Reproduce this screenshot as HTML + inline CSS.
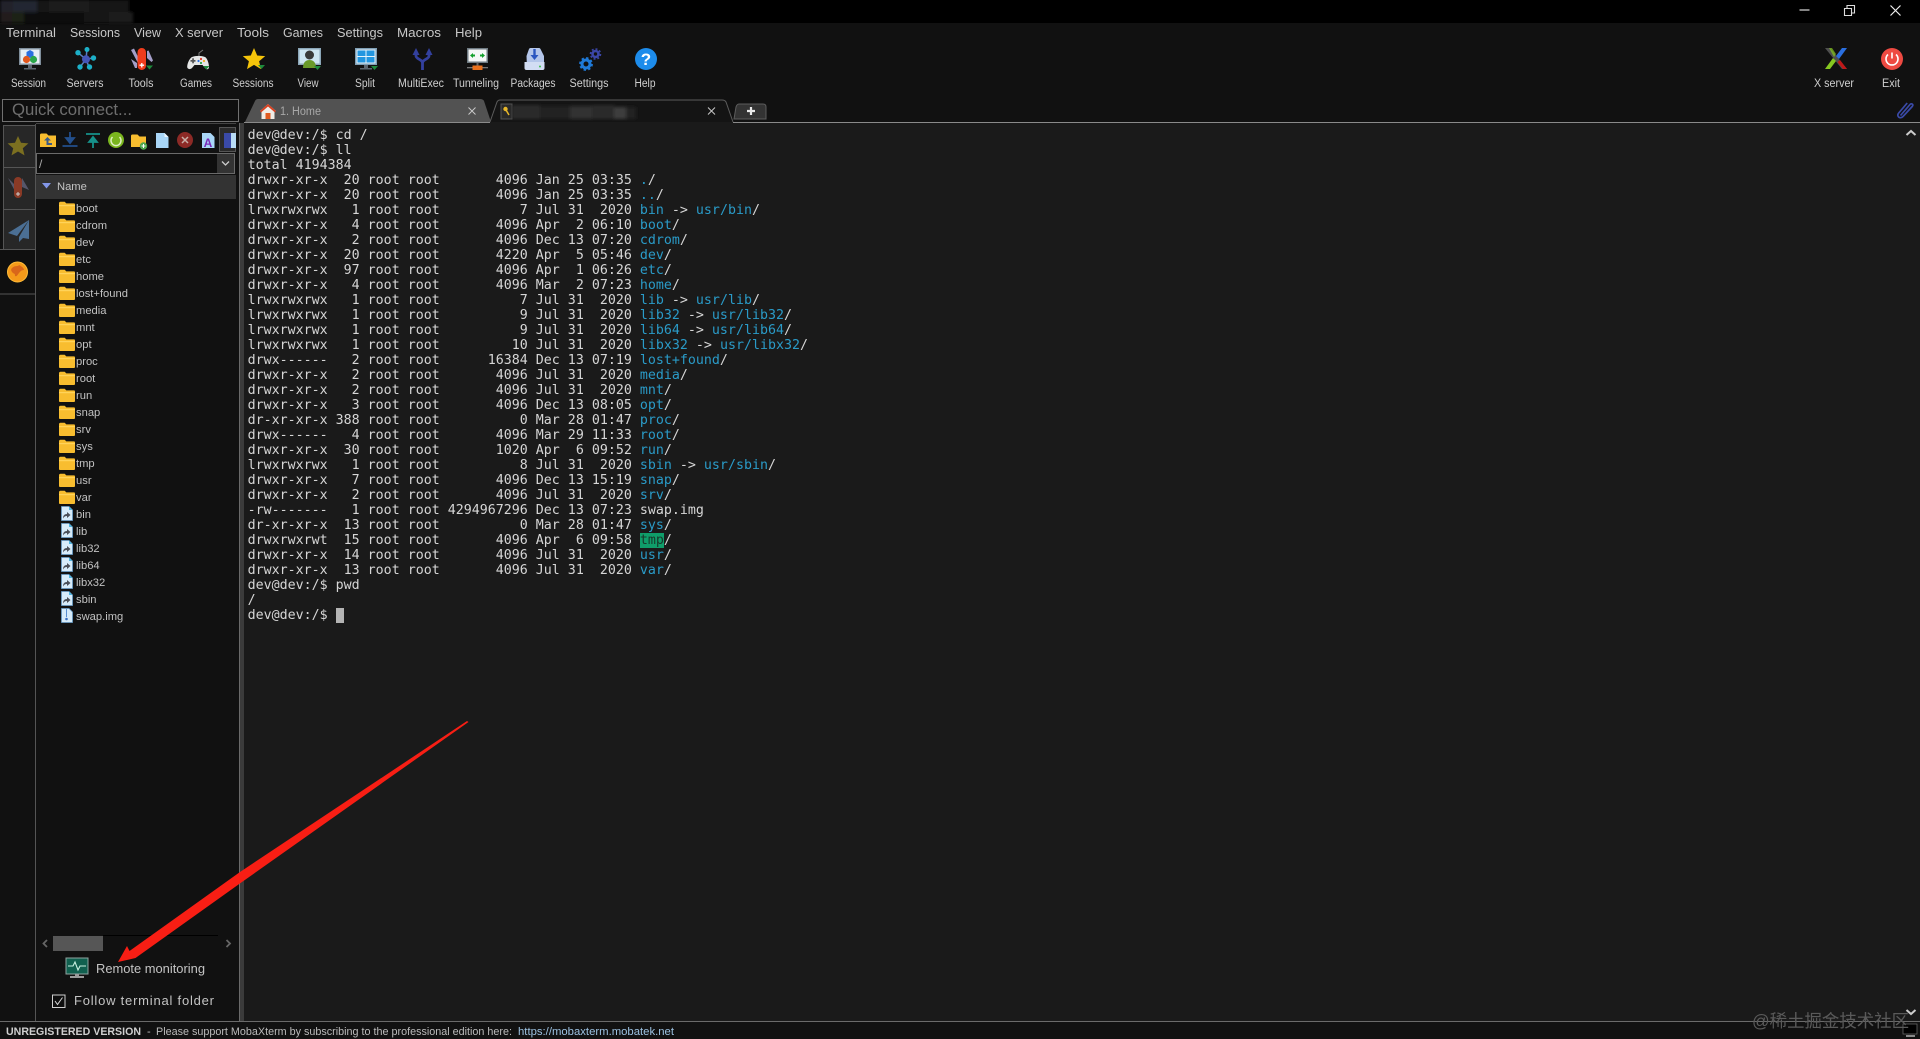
<!DOCTYPE html>
<html><head><meta charset="utf-8"><title>MobaXterm</title>
<style>
html,body{margin:0;padding:0;width:1920px;height:1039px;overflow:hidden;background:#111}
svg{position:absolute;left:0;top:0}
text{font-family:"Liberation Sans",sans-serif}
pre{position:absolute;left:247.6px;top:128px;margin:0;font:13.3px/15px "DejaVu Sans Mono","Liberation Mono",monospace;color:#d6d6d6;white-space:pre}
pre b{font-weight:normal;color:#2a9bc8}
pre i{font-style:normal;background:#0f9d6a;color:#17392b}
pre u{text-decoration:none;display:inline-block;width:8px;height:15px;background:#b4b4b4;vertical-align:top}
.ov{z-index:3}
</style></head><body>
<svg width="1920" height="1039" viewBox="0 0 1920 1039">
<defs>
<symbol id="fd" viewBox="0 0 16 14" width="16" height="14"><path d="M0 2.5C0 1.2.7.8 1.5.8h4.2l1.600 1.600H15c.6 0 1 .4 1 1V13c0 .6-.4 1-1 1H1c-.6 0-1-.4-1-1z" fill="#f8bd2f"/><path d="M0 4h16v1.200H0z" fill="#ffd35a"/></symbol>
<symbol id="fl" viewBox="0 0 12 15" width="12" height="15"><path d="M.5.5h7.500l3.500 3.500v10.500H.5z" fill="#d7ecfa" stroke="#6a9fca" stroke-width=".8"/><path d="M8 .5v3.500h3.500z" fill="#4fb5de"/><path d="M2 12.500c0-3 1.500-4.500 4-4.500V6l3.500 3-3.500 3v-2c-2 0-3 .8-4 2.500z" fill="#4a4f58"/></symbol>
<filter id="bl"><feGaussianBlur stdDeviation="1.500"/></filter>
</defs>

<!-- bars -->
<rect width="1920" height="1039" fill="#111"/>
<rect width="1920" height="23" fill="#000"/>
<g filter="url(#bl)">
<rect x="0" y="0" width="13" height="12" fill="#20232b"/><rect x="13" y="0" width="24" height="12" fill="#232633"/><rect x="37" y="0" width="12" height="12" fill="#121212"/><rect x="49" y="0" width="40" height="12" fill="#1b1b1b"/><rect x="89" y="0" width="40" height="12" fill="#141414"/>
<rect x="0" y="12" width="12" height="11" fill="#241c1c"/><rect x="12" y="12" width="12" height="11" fill="#1b2016"/><rect x="24" y="12" width="60" height="11" fill="#0e0e0e"/><rect x="84" y="12" width="25" height="11" fill="#141414"/><rect x="109" y="12" width="24" height="11" fill="#1c1c1c"/>
</g>
<!-- window controls -->
<path d="M1799.500 10h10" stroke="#ddd" stroke-width="1.200"/>
<path d="M1844.500 8.500h7v7h-7zM1847 8V5.500h7.500v7.500h-2.800" fill="none" stroke="#ddd" stroke-width="1.100"/>
<path d="M1890.500 5.500l10 10m0-10l-10 10" stroke="#eee" stroke-width="1.200"/>

<!-- menu -->
<g font-size="13" fill="#c8c8c8">
<text x="6" y="37" textLength="50" lengthAdjust="spacingAndGlyphs">Terminal</text>
<text x="70" y="37" textLength="50" lengthAdjust="spacingAndGlyphs">Sessions</text>
<text x="134" y="37" textLength="27" lengthAdjust="spacingAndGlyphs">View</text>
<text x="175" y="37" textLength="48" lengthAdjust="spacingAndGlyphs">X server</text>
<text x="237" y="37" textLength="32" lengthAdjust="spacingAndGlyphs">Tools</text>
<text x="283" y="37" textLength="40" lengthAdjust="spacingAndGlyphs">Games</text>
<text x="337" y="37" textLength="46" lengthAdjust="spacingAndGlyphs">Settings</text>
<text x="397" y="37" textLength="44" lengthAdjust="spacingAndGlyphs">Macros</text>
<text x="455" y="37" textLength="27" lengthAdjust="spacingAndGlyphs">Help</text>
</g>

<!-- toolbar labels -->
<g font-size="11.500" fill="#cfcfcf" text-anchor="middle">
<text x="28.500" y="87" textLength="35" lengthAdjust="spacingAndGlyphs">Session</text>
<text x="85" y="87" textLength="37" lengthAdjust="spacingAndGlyphs">Servers</text>
<text x="141" y="87" textLength="25" lengthAdjust="spacingAndGlyphs">Tools</text>
<text x="196" y="87" textLength="32" lengthAdjust="spacingAndGlyphs">Games</text>
<text x="253" y="87" textLength="41" lengthAdjust="spacingAndGlyphs">Sessions</text>
<text x="308" y="87" textLength="21" lengthAdjust="spacingAndGlyphs">View</text>
<text x="365" y="87" textLength="20" lengthAdjust="spacingAndGlyphs">Split</text>
<text x="421" y="87" textLength="46" lengthAdjust="spacingAndGlyphs">MultiExec</text>
<text x="476" y="87" textLength="46" lengthAdjust="spacingAndGlyphs">Tunneling</text>
<text x="533" y="87" textLength="45" lengthAdjust="spacingAndGlyphs">Packages</text>
<text x="589" y="87" textLength="39" lengthAdjust="spacingAndGlyphs">Settings</text>
<text x="645" y="87" textLength="21" lengthAdjust="spacingAndGlyphs">Help</text>
<text x="1834" y="87" textLength="40" lengthAdjust="spacingAndGlyphs">X server</text>
<text x="1891" y="87" textLength="18" lengthAdjust="spacingAndGlyphs">Exit</text>
</g>

<!-- Session -->
<rect x="19" y="48" width="22" height="17" fill="#7f8e9b"/><rect x="20.500" y="49.500" width="19" height="14" fill="#e6eef6"/>
<path d="M30 50l3.500 2v4l-3.500 2-3.500-2v-4z" fill="#2a6fe0"/><circle cx="26.500" cy="59.500" r="3.600" fill="#e2571d"/><circle cx="33.500" cy="59.500" r="3.600" fill="#2aa64a"/>
<rect x="28" y="65" width="4" height="3" fill="#5c6670"/><rect x="24" y="68" width="12" height="1.500" fill="#5c6670"/>
<!-- Servers -->
<g stroke="#5a7fc0" stroke-width="1.500"><path d="M86 59.300L78 52.700M86 59.300L87 49M86 59.300L93 58M86 59.300L89 67M86 59.300L80 67"/></g>
<g fill="#1cb0c8"><circle cx="78" cy="52.700" r="2.700"/><circle cx="87" cy="49.500" r="2.500"/><circle cx="93.500" cy="58" r="2.700"/><circle cx="89.500" cy="67" r="2.700"/><circle cx="80" cy="67" r="2.700"/></g>
<circle cx="86" cy="59.300" r="4" fill="#4455b8"/>
<!-- Tools -->
<path d="M131 50l3-1.500 5 10.500v6zM131 59l6 4v5l-2 0zM147 51l1.500-.5 4.500 10-1.500 1.500-4.500-4z" fill="#a49ec8"/>
<rect x="137.500" y="48" width="8.500" height="22" rx="4.200" fill="#ef3c1c"/><path d="M141.800 63v4.500M139.500 65.200h4.600" stroke="#fff" stroke-width="1.300"/>
<path d="M146 65.500h7l-3.500 4z" fill="#1e8a3c"/>
<!-- Games -->
<path d="M192 57c4-1.500 9-1.500 13 0 2 1 4 6 4 10 0 2.500-2.500 3-4 1l-2.500-3h-8L192 68c-2 2-5 1-4.800-1.500.2-4 2.800-8.500 4.800-9.500z" fill="#e4e6e6"/>
<path d="M199 56v-3l4-3" stroke="#777" fill="none"/>
<rect x="190.500" y="60" width="5" height="1.700" fill="#555"/><rect x="192.200" y="58.300" width="1.700" height="5" fill="#555"/>
<circle cx="201" cy="59" r="1.100" fill="#e03a2a"/><circle cx="204" cy="61" r="1.100" fill="#f0b020"/><circle cx="198.500" cy="61" r="1.100" fill="#2a6fe0"/><circle cx="201" cy="63" r="1.100" fill="#2aa64a"/>
<path d="M203 66h6.500l-3.200 3.500z" fill="#1e8a3c"/>
<!-- Sessions star -->
<path d="M254 48l3.200 7.500 8 .6-6.100 5.200 1.900 7.800-7-4.200-7 4.200 1.900-7.800-6.100-5.200 8-.6z" fill="#f5c40a"/><path d="M258 65h7l-3.500 4z" fill="#1e8a3c"/>
<!-- View -->
<rect x="298" y="48" width="23" height="17" fill="#8ba6b8"/><rect x="299.500" y="49.500" width="20" height="14" fill="#cfe6f2"/>
<circle cx="309.500" cy="55" r="4.500" fill="#3a3a3a"/><path d="M303 68c0-6 3-8 6.500-8s6.500 2 6.500 8z" fill="#6a9a2a"/>
<path d="M314 66h7l-3.500 4z" fill="#1e8a3c"/>
<!-- Split -->
<rect x="355" y="48" width="22" height="17" fill="#7f9fb5"/><rect x="356.500" y="49.500" width="19" height="14" fill="#e4f2fa"/>
<rect x="357.500" y="50.500" width="8" height="5.500" fill="#2296e0"/><rect x="366.500" y="50.500" width="8" height="5.500" fill="#2296e0"/><rect x="357.500" y="57" width="8" height="5.500" fill="#2296e0"/><rect x="366.500" y="57" width="8" height="5.500" fill="#2296e0"/>
<rect x="364" y="65" width="4" height="3" fill="#5c6670"/><rect x="360" y="68" width="12" height="1.500" fill="#5c6670"/>
<path d="M371 66h7l-3.500 4z" fill="#1e8a3c"/>
<!-- MultiExec -->
<path d="M422.500 70V62M416 53v3c0 3 6.500 3.500 6.500 7 0-3.500 6.500-4 6.500-7v-3" fill="none" stroke="#33409e" stroke-width="2.800"/>
<path d="M412.500 55l3.500-7 3.500 7zM425.500 55l3.500-7 3.500 7z" fill="#33409e"/>
<!-- Tunneling -->
<rect x="467" y="48" width="21" height="15" fill="#6e7a82"/><rect x="468.500" y="49.500" width="18" height="12" fill="#f5f7f7"/>
<path d="M470 55.500l3-2.500v1.500h2v2h-2V58zM485 55.500l-3-2.500v1.500h-2v2h2V58z" fill="#14a02e"/>
<rect x="476.500" y="63" width="2" height="3" fill="#666"/><rect x="467" y="67" width="21" height="1.300" fill="#777"/><rect x="472.500" y="65.500" width="10" height="4.500" fill="#e8701c"/>
<!-- Packages -->
<path d="M526.500 56l2.500-7q.4-1 1.500-1h8.500q1.100 0 1.500 1l3.500 7v12a2 2 0 0 1-2 2h-13a2 2 0 0 1-2-2z" fill="#b4c6ea"/><path d="M524.500 62h20v6a2 2 0 0 1-2 2h-16a2 2 0 0 1-2-2z" fill="#d2ddf3"/>
<path d="M534.500 49v7" stroke="#2a55c0" stroke-width="2.400"/><path d="M530.500 55h8l-4 5z" fill="#2a55c0"/><circle cx="540" cy="66.500" r="1" fill="#3cc04a"/>
<!-- Settings -->
<circle cx="586" cy="64" r="4" fill="none" stroke="#1f7ad8" stroke-width="3"/><circle cx="586" cy="64" r="6" fill="none" stroke="#1f7ad8" stroke-width="1.800" stroke-dasharray="2.400 2.300"/>
<circle cx="595.500" cy="54" r="3" fill="none" stroke="#3b46a8" stroke-width="2.600"/><circle cx="595.500" cy="54" r="5" fill="none" stroke="#3b46a8" stroke-width="1.600" stroke-dasharray="2 1.900"/>
<!-- Help -->
<circle cx="646" cy="59" r="11" fill="#1d8ceb"/><text x="646" y="65" font-size="17" font-weight="bold" fill="#fff" text-anchor="middle">?</text>
<!-- X server -->
<path d="M1825 48h5l17 21h-5z" fill="#4f4f4f"/><path d="M1825 69l8-11 3 3-6 8z" fill="#86c820"/><path d="M1842 48h5l-8 11-3-3z" fill="#2a6fe0"/><path d="M1829 48h3l4 6-2 3z" fill="#86c820" opacity=".7"/><path d="M1840 60l7 9h-4l-5.500-7z" fill="#c01818"/>
<!-- Exit -->
<circle cx="1892" cy="59" r="11" fill="#ee4a42"/><path d="M1888 54.500a6 6 0 1 0 8 0" fill="none" stroke="#fff" stroke-width="1.600"/><path d="M1892 52.500v6" stroke="#fff" stroke-width="1.600"/>

<!-- quick connect -->
<rect x="2.500" y="99.500" width="236" height="22" fill="#0e0e0e" stroke="#707070"/>
<text x="12" y="115" font-size="16.500" fill="#6e6e6e" textLength="120" lengthAdjust="spacingAndGlyphs">Quick connect...</text>

<!-- tabs -->
<rect x="244" y="122" width="1676" height="900" fill="#1a1a1a"/>
<path d="M245 122l10-21q1-2 3-2H480q3 0 4 2l7 21z" fill="#525252"/>
<path d="M260 111l8-7 8 7h-1.500v8h-13v-8z" fill="#f0ece6"/><path d="M260 111l8-7 8 7-1 1.500-7-6-7 6z" fill="#d8401f"/><rect x="265.500" y="113" width="5" height="6" fill="#e05a20"/>
<text x="280" y="115" font-size="11.500" fill="#a8a8a8" textLength="41" lengthAdjust="spacingAndGlyphs">1. Home</text>
<path d="M468.500 107.500l7 7m0-7l-7 7" stroke="#c8c8c8" stroke-width="1"/>
<path d="M490 122l7-20q1-2 3-2H722q3 0 4 2l7 20" fill="#141414" stroke="#5c5c5c"/>
<rect x="501" y="104" width="11" height="15" fill="#2a2a2a" stroke="#555"/><circle cx="505.500" cy="109" r="2.200" fill="#e8b82a"/><path d="M506 110l3 5" stroke="#e8b82a" stroke-width="1.500"/>
<g filter="url(#bl)"><rect x="512" y="105" width="28" height="14" fill="#2c2c2c"/><rect x="540" y="106" width="30" height="13" fill="#242424"/><rect x="570" y="106" width="22" height="13" fill="#303030"/><rect x="592" y="105" width="22" height="14" fill="#2a2a2a"/><rect x="614" y="107" width="12" height="12" fill="#3c3c3c"/><rect x="626" y="107" width="10" height="12" fill="#222"/></g>
<path d="M708 107.500l7 7m0-7l-7 7" stroke="#c8c8c8" stroke-width="1"/>
<path d="M734 119l2-12q1-3 3-3h24q3 0 3 3v12z" fill="#333" stroke="#5c5c5c"/>
<path d="M751 107v8M747 111h8" stroke="#e8e8e8" stroke-width="2.200"/>
<path d="M244 122.500H490M733 122.500H1920" stroke="#8a8a8a"/>
<path d="M1900.500 115.500l9.500-11c1.600-1.800 3.800.2 2.200 2l-9.200 10c-3 3-7-.3-4.300-3.500l8.500-10" fill="none" stroke="#3a4aa8" stroke-width="1.700"/>

<!-- terminal scroll chevrons -->
<path d="M1906.500 135l4.500-4 4.500 4" fill="none" stroke="#ccc" stroke-width="2"/>
<path d="M1906.500 1010l4.500 4 4.500-4" fill="none" stroke="#ccc" stroke-width="2"/>

<!-- splitter -->
<rect x="239" y="123" width="5" height="898" fill="#3b3b3b"/><rect x="239" y="123" width="1" height="898" fill="#6a6a6a"/>

<!-- left tabs -->
<rect x="3" y="125" width="32" height="124" fill="#272727"/>
<path d="M3.500 125v124M3 125.500h32M3 167.500h32M3 209.500h32" stroke="#555" fill="none"/>
<path d="M0 249.500h35.500v44.500H0" fill="#0f0f0f" stroke="#555"/>
<path d="M18 136l3 6.800 7.400.6-5.600 4.800 1.700 7.200-6.500-3.900-6.500 3.900 1.700-7.200-5.600-4.800 7.400-.6z" fill="#7b6f20"/>
<path d="M8 178l9 9v8zM29 190l-7-12v9z" fill="#56566a"/><rect x="14" y="177" width="8" height="21" rx="4" fill="#8a3a26"/><path d="M18 192v4M16 194h4" stroke="#ccc"/>
<path d="M29 220L8 233l9 3zM29 220l-10 17v5l4-4 6 1z" fill="#4b6f94"/>
<circle cx="17.500" cy="272" r="10" fill="#f59a1a"/><path d="M12 268c3-3 6-1 7-3 2 1 5 3 5 5-3 0-4 2-5 3s-2 4-4 3c0-3-1-2-2-3s-3-3-1-5z" fill="#d9661a"/><circle cx="17.500" cy="272" r="10" fill="none" stroke="#ffbd3a"/>

<!-- sftp panel -->
<path d="M35.500 124v897" stroke="#555"/><path d="M36 123.500h200" stroke="#444"/>
<!-- file toolbar -->
<path d="M40 135c0-1 .5-1.500 1.500-1.500h5l2 2H56v11.500H40z" fill="#f8bd2f"/><path d="M47.500 137l-3.500 3.500h2.500V145H52v-2h-3.500v-2.500H51z" fill="#3a5a88"/>
<path d="M70 132v9M66 138l4 5 4-5zM62.500 146h15" stroke="#234f8c" fill="#234f8c" stroke-width="1.800"/>
<path d="M86 134h14M93 148v-9M89 142l4-5 4 5z" stroke="#16918a" fill="#16918a" stroke-width="1.800"/>
<circle cx="116" cy="140" r="8" fill="#7ab51e"/><path d="M112.500 137a5 5 0 1 0 7 0" fill="none" stroke="#dff0c0" stroke-width="1.500"/>
<path d="M131 136c0-1 .5-1.500 1.500-1.500h5l2 2h6.500V147h-15z" fill="#f8bd2f"/><circle cx="143.500" cy="146" r="3.700" fill="#4ea84e"/><path d="M143.500 144v4M141.500 146h4" stroke="#fff"/>
<path d="M156 133h8.500l4 4v11H156z" fill="#a9d6f7"/><path d="M164.500 133v4h4z" fill="#ecf7ff"/>
<circle cx="185" cy="140" r="8" fill="#8c2a26"/><path d="M182 137l6 6m0-6l-6 6" stroke="#c8b0a8" stroke-width="1.500"/>
<path d="M202 133h8.500l4 4v11H202z" fill="#a9d6f7"/><text x="208" y="147" font-size="12" font-weight="bold" fill="#7a2ab8" text-anchor="middle">A</text>
<rect x="219.500" y="127.500" width="16" height="24" fill="#2a2a2a" stroke="#555"/><rect x="224" y="133" width="7" height="15" fill="#3a4aa8"/><rect x="231" y="133" width="5" height="15" fill="#b8dcf5"/>
<!-- path box -->
<rect x="36.500" y="153.500" width="198" height="20" fill="#0e0e0e" stroke="#6a6a6a"/>
<text x="39" y="168" font-size="12" fill="#aaa">/</text>
<rect x="217" y="154" width="17" height="19" fill="#333"/><path d="M222 161.500l3.500 3.500 3.500-3.500" fill="none" stroke="#ccc" stroke-width="1.300"/>
<!-- header -->
<rect x="36" y="175" width="200" height="24" fill="#333"/>
<path d="M42 183h9l-4.500 5.500z" fill="#8397e8"/>
<text x="57" y="190" font-size="11.200" fill="#c4c4c4">Name</text>
<!-- tree -->
<g font-size="11.200" fill="#c2c2c2">
<use href="#fd" x="59" y="201"/><text x="76" y="212">boot</text>
<use href="#fd" x="59" y="218"/><text x="76" y="229">cdrom</text>
<use href="#fd" x="59" y="235"/><text x="76" y="246">dev</text>
<use href="#fd" x="59" y="252"/><text x="76" y="263">etc</text>
<use href="#fd" x="59" y="269"/><text x="76" y="280">home</text>
<use href="#fd" x="59" y="286"/><text x="76" y="297">lost+found</text>
<use href="#fd" x="59" y="303"/><text x="76" y="314">media</text>
<use href="#fd" x="59" y="320"/><text x="76" y="331">mnt</text>
<use href="#fd" x="59" y="337"/><text x="76" y="348">opt</text>
<use href="#fd" x="59" y="354"/><text x="76" y="365">proc</text>
<use href="#fd" x="59" y="371"/><text x="76" y="382">root</text>
<use href="#fd" x="59" y="388"/><text x="76" y="399">run</text>
<use href="#fd" x="59" y="405"/><text x="76" y="416">snap</text>
<use href="#fd" x="59" y="422"/><text x="76" y="433">srv</text>
<use href="#fd" x="59" y="439"/><text x="76" y="450">sys</text>
<use href="#fd" x="59" y="456"/><text x="76" y="467">tmp</text>
<use href="#fd" x="59" y="473"/><text x="76" y="484">usr</text>
<use href="#fd" x="59" y="490"/><text x="76" y="501">var</text>
<use href="#fl" x="61" y="506"/><text x="76" y="518">bin</text>
<use href="#fl" x="61" y="523"/><text x="76" y="535">lib</text>
<use href="#fl" x="61" y="540"/><text x="76" y="552">lib32</text>
<use href="#fl" x="61" y="557"/><text x="76" y="569">lib64</text>
<use href="#fl" x="61" y="574"/><text x="76" y="586">libx32</text>
<use href="#fl" x="61" y="591"/><text x="76" y="603">sbin</text>
<path d="M61.500 608.500h7.500l3.500 3.500v10.500h-11z" fill="#d7ecfa" stroke="#6a9fca" stroke-width=".8"/><path d="M66.500 609v8" stroke="#5a8fd0" stroke-width="1"/><circle cx="66.500" cy="619" r="1.300" fill="#3a6fc0"/>
<text x="76" y="620">swap.img</text>
</g>
<!-- h scrollbar -->
<path d="M103 935.500h115" stroke="#000"/>
<rect x="53" y="936" width="50" height="15" fill="#565656"/>
<path d="M47 940l-3.500 3.500 3.500 3.500M226.500 940l3.500 3.500-3.500 3.500" fill="none" stroke="#666" stroke-width="1.800"/>
<!-- remote monitoring -->
<rect x="66" y="958" width="22" height="16" fill="#11604f" stroke="#8fa3a0"/><path d="M68 966h5l2-4 3 8 2-4h6" fill="none" stroke="#c8efe0" stroke-width="1.100"/>
<rect x="75" y="974" width="4" height="2" fill="#9a9a9a"/><rect x="70" y="976" width="14" height="2" fill="#9a9a9a"/>
<text x="96" y="973" font-size="13" fill="#c4c4c4" textLength="109" lengthAdjust="spacingAndGlyphs">Remote monitoring</text>
<rect x="52.500" y="995" width="12.500" height="12.500" fill="#0e0e0e" stroke="#d0d0d0"/><path d="M55 1001l2.500 3.500 5-7" fill="none" stroke="#d8d8d8" stroke-width="1"/>
<text x="74" y="1005" font-size="13" fill="#c4c4c4" textLength="140" lengthAdjust="spacing">Follow terminal folder</text>

<!-- status bar -->
<rect x="0" y="1022" width="1920" height="17" fill="#111"/>
<path d="M0 1021.500H1920" stroke="#6a6a6a"/>
<text x="6" y="1035" font-size="11" font-weight="bold" fill="#cfcfcf" textLength="135" lengthAdjust="spacingAndGlyphs">UNREGISTERED VERSION</text>
<text x="147" y="1035" font-size="11" fill="#bbb">-</text>
<text x="156" y="1035" font-size="11" fill="#bbb" textLength="356" lengthAdjust="spacingAndGlyphs">Please support MobaXterm by subscribing to the professional edition here:</text>
<text x="518" y="1035" font-size="11" fill="#9cc2e2" textLength="156" lengthAdjust="spacingAndGlyphs">https://mobaxterm.mobatek.net</text>
<!-- monitor bottom right -->
<rect x="1903" y="1024" width="14" height="10" fill="#000" stroke="#666" stroke-width=".8"/><rect x="1906" y="1035" width="9" height="2" fill="#888"/>
</svg>

<pre>dev@dev:/$ cd /
dev@dev:/$ ll
total 4194384
drwxr-xr-x  20 root root       4096 Jan 25 03:35 <b>.</b>/
drwxr-xr-x  20 root root       4096 Jan 25 03:35 <b>..</b>/
lrwxrwxrwx   1 root root          7 Jul 31  2020 <b>bin</b> -&gt; <b>usr/bin</b>/
drwxr-xr-x   4 root root       4096 Apr  2 06:10 <b>boot</b>/
drwxr-xr-x   2 root root       4096 Dec 13 07:20 <b>cdrom</b>/
drwxr-xr-x  20 root root       4220 Apr  5 05:46 <b>dev</b>/
drwxr-xr-x  97 root root       4096 Apr  1 06:26 <b>etc</b>/
drwxr-xr-x   4 root root       4096 Mar  2 07:23 <b>home</b>/
lrwxrwxrwx   1 root root          7 Jul 31  2020 <b>lib</b> -&gt; <b>usr/lib</b>/
lrwxrwxrwx   1 root root          9 Jul 31  2020 <b>lib32</b> -&gt; <b>usr/lib32</b>/
lrwxrwxrwx   1 root root          9 Jul 31  2020 <b>lib64</b> -&gt; <b>usr/lib64</b>/
lrwxrwxrwx   1 root root         10 Jul 31  2020 <b>libx32</b> -&gt; <b>usr/libx32</b>/
drwx------   2 root root      16384 Dec 13 07:19 <b>lost+found</b>/
drwxr-xr-x   2 root root       4096 Jul 31  2020 <b>media</b>/
drwxr-xr-x   2 root root       4096 Jul 31  2020 <b>mnt</b>/
drwxr-xr-x   3 root root       4096 Dec 13 08:05 <b>opt</b>/
dr-xr-xr-x 388 root root          0 Mar 28 01:47 <b>proc</b>/
drwx------   4 root root       4096 Mar 29 11:33 <b>root</b>/
drwxr-xr-x  30 root root       1020 Apr  6 09:52 <b>run</b>/
lrwxrwxrwx   1 root root          8 Jul 31  2020 <b>sbin</b> -&gt; <b>usr/sbin</b>/
drwxr-xr-x   7 root root       4096 Dec 13 15:19 <b>snap</b>/
drwxr-xr-x   2 root root       4096 Jul 31  2020 <b>srv</b>/
-rw-------   1 root root 4294967296 Dec 13 07:23 swap.img
dr-xr-xr-x  13 root root          0 Mar 28 01:47 <b>sys</b>/
drwxrwxrwt  15 root root       4096 Apr  6 09:58 <i>tmp</i>/
drwxr-xr-x  14 root root       4096 Jul 31  2020 <b>usr</b>/
drwxr-xr-x  13 root root       4096 Jul 31  2020 <b>var</b>/
dev@dev:/$ pwd
/
dev@dev:/$ <u></u></pre>

<svg class="ov" width="1920" height="1039" viewBox="0 0 1920 1039">
<path d="M118 962L127 946 129.500 951 240 872 467 721 468.500 722 242 882 135.500 958z" fill="#f81e14"/>
<text x="1752" y="1027" font-size="17.500" fill="#5a5a5a" textLength="157" lengthAdjust="spacingAndGlyphs" style='font-family:"Liberation Sans","Noto Sans CJK SC",sans-serif'>@稀土掘金技术社区</text>
</svg>
</body></html>
